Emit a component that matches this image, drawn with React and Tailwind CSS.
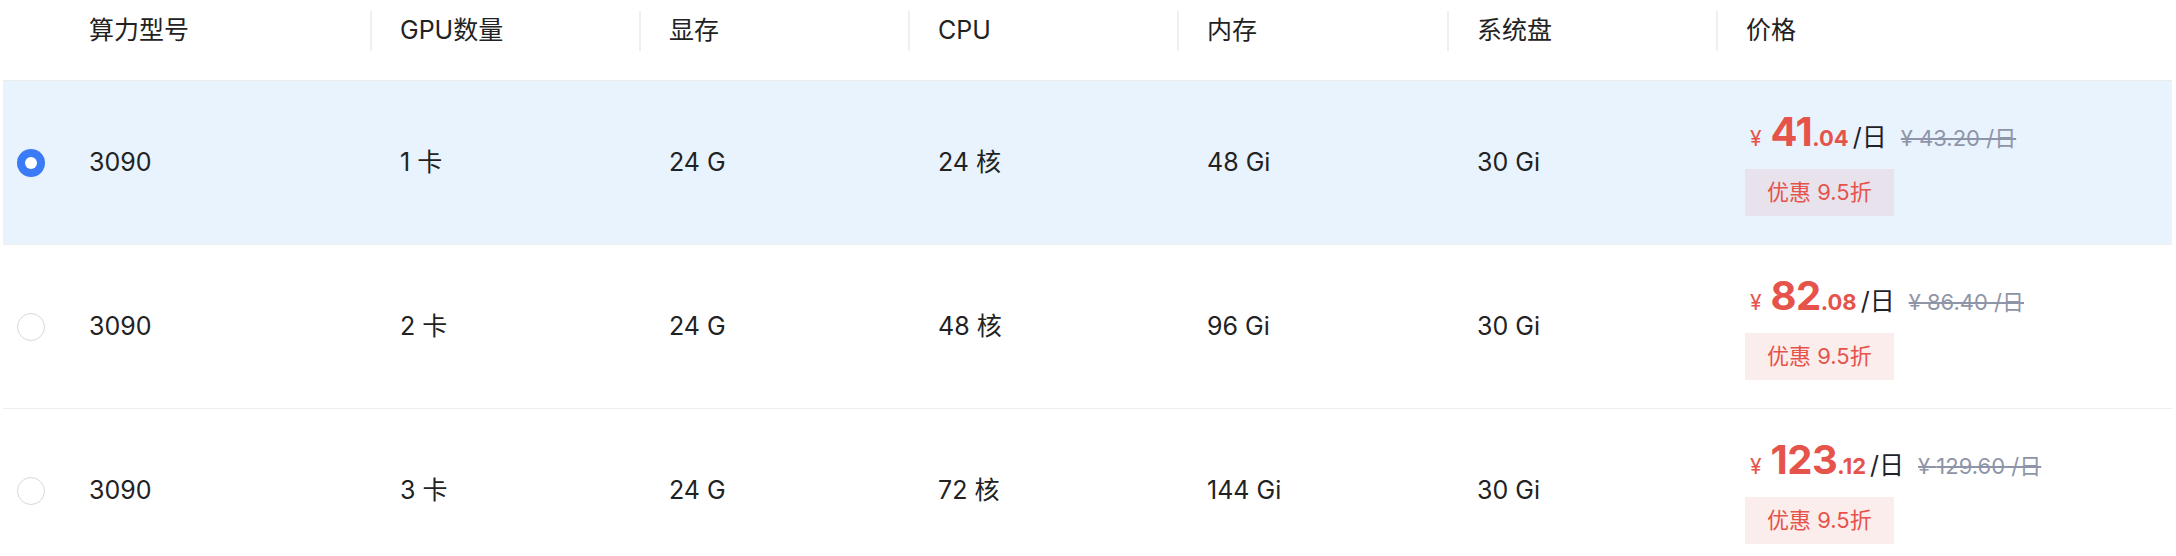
import React, { useState } from 'react';

const cols = ['算力型号', 'GPU数量', '显存', 'CPU', '内存', '系统盘', '价格'];

const rows = [
  { id: 1, model: '3090', gpu: '1 卡', vram: '24 G', cpu: '24 核', mem: '48 Gi', disk: '30 Gi', int: '41', dec: '.04', old: '43.20' },
  { id: 2, model: '3090', gpu: '2 卡', vram: '24 G', cpu: '48 核', mem: '96 Gi', disk: '30 Gi', int: '82', dec: '.08', old: '86.40' },
  { id: 3, model: '3090', gpu: '3 卡', vram: '24 G', cpu: '72 核', mem: '144 Gi', disk: '30 Gi', int: '123', dec: '.12', old: '129.60' },
];

const grid = 'grid grid-cols-[56px_311px_269px_269px_269px_270px_269px_1fr]';

function Radio({ checked }) {
  if (checked) {
    return (
      <div className="w-[28px] h-[28px] rounded-full bg-[#3c7bf7] flex items-center justify-center">
        <div className="w-[12px] h-[12px] rounded-full bg-white"></div>
      </div>
    );
  }
  return <div className="w-[28px] h-[28px] rounded-full border border-[#d9d9d9] bg-white"></div>;
}

export default function App() {
  const [selected, setSelected] = useState(1);

  return (
    <div className="w-[2176px] h-[556px] bg-white overflow-hidden pl-[3px] pr-[4px] font-['Inter','Noto_Sans_CJK_SC',sans-serif] text-[25px] text-[#222]">
      {/* header */}
      <div className={`${grid} h-[81px] pt-[11px] border-b border-[#ebebeb] items-start`}>
        <div></div>
        {cols.map((c, i) => (
          <div
            key={c}
            className={`h-[40px] flex items-center ${i === 0 ? 'pl-[30px]' : 'pl-[28px] border-l-2 border-[#efefef]'}`}
          >
            {c}
          </div>
        ))}
      </div>

      {/* rows */}
      {rows.map((r) => {
        const active = selected === r.id;
        return (
          <div
            key={r.id}
            onClick={() => setSelected(r.id)}
            className={`${grid} h-[164px] border-b border-[#efefef] items-center cursor-pointer ${active ? 'bg-[#e8f3fd]' : 'bg-white'}`}
          >
            <div className="flex justify-center">
              <Radio checked={active} />
            </div>
            <div className="pl-[30px]">{r.model}</div>
            <div className="pl-[30px]">{r.gpu}</div>
            <div className="pl-[30px]">{r.vram}</div>
            <div className="pl-[30px]">{r.cpu}</div>
            <div className="pl-[30px]">{r.mem}</div>
            <div className="pl-[30px]">{r.disk}</div>
            <div className="pl-[29px] flex flex-col items-start gap-[17px] pt-[2px]">
              <div className="flex items-baseline leading-none">
                <span className="text-[21px] text-[#e5534b] ml-[5px] mr-[9px]">¥</span>
                <span className="text-[40px] font-bold text-[#e5534b] tracking-[-0.5px]">{r.int}</span>
                <span className="text-[22px] font-bold text-[#e5534b]">{r.dec}</span>
                <span className="text-[25px] text-[#1f2229] ml-[4px]">/日</span>
                <span className="text-[22px] text-[#8f95a8] line-through ml-[14px]">¥ {r.old} /日</span>
              </div>
              <div className="h-[47px] px-[22px] flex items-center bg-[#e5534b]/10 text-[#e5534b] text-[22px] leading-none">
                优惠 9.5折
              </div>
            </div>
          </div>
        );
      })}
    </div>
  );
}
